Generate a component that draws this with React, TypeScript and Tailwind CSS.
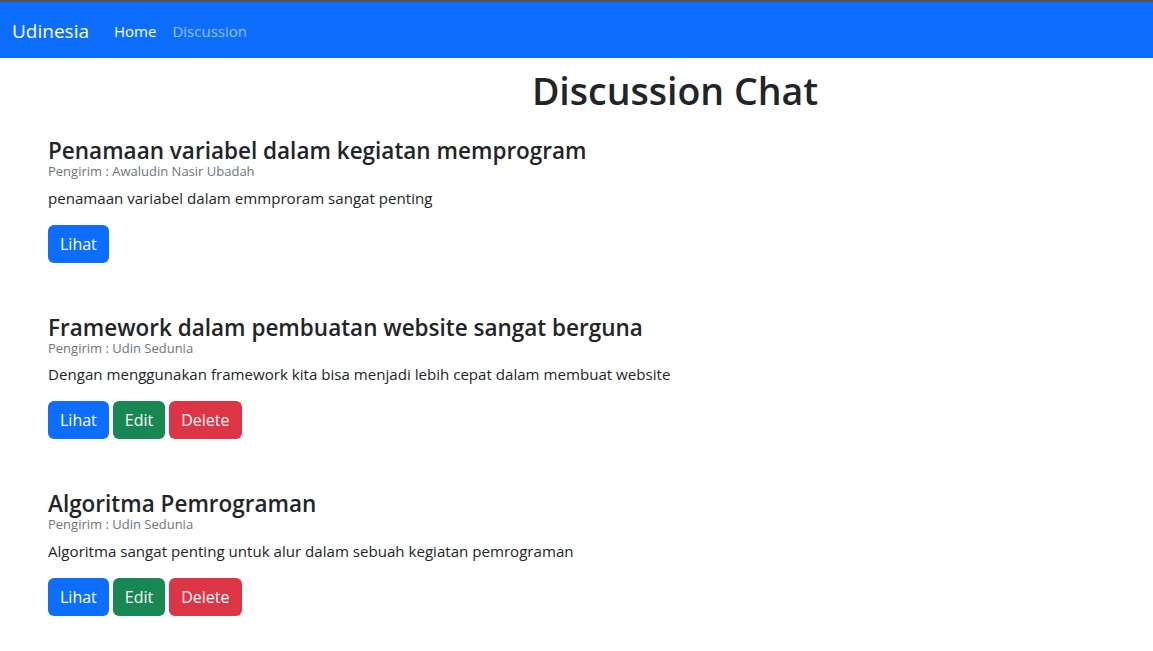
import React from 'react'

const POSTS = [
  {
    title: 'Penamaan variabel dalam kegiatan memprogram',
    sender: 'Awaludin Nasir Ubadah',
    body: 'penamaan variabel dalam emmproram sangat penting',
    own: false,
  },
  {
    title: 'Framework dalam pembuatan website sangat berguna',
    sender: 'Udin Sedunia',
    body: 'Dengan menggunakan framework kita bisa menjadi lebih cepat dalam membuat website',
    own: true,
  },
  {
    title: 'Algoritma Pemrograman',
    sender: 'Udin Sedunia',
    body: 'Algoritma sangat penting untuk alur dalam sebuah kegiatan pemrograman',
    own: true,
  },
]

const btn = 'h-[38px] px-3 rounded-[6px] text-white text-base leading-6'

export default function App() {
  return (
    <div className="min-h-[651px] bg-white text-[#212529]" style={{ fontFamily: '"Open Sans", "Noto Sans", sans-serif' }}>
      <div className="h-[2px] bg-[#555]" />
      <nav className="h-[56px] bg-[#0d6efd] px-3 flex items-center pt-[2px]">
        <span className="text-[19px] text-white mr-[17px]">Udinesia</span>
        <a className="px-2 text-[15px] text-white">Home</a>
        <a className="px-2 text-[15px] text-white/55">Discussion</a>
      </nav>

      <main className="pl-12">
        <h1 className="ml-[149px] text-center text-[37.5px] font-semibold leading-[1.2] mt-[10px]">Discussion Chat</h1>

        <div className="flex flex-col gap-[51px] mt-[24px]">
          {POSTS.map((p) => (
            <div key={p.title}>
              <h4 className="text-[22.5px] font-semibold leading-[1.2]">{p.title}</h4>
              <small className="block text-[13px] leading-[1.2] text-[#6c757d]">Pengirim : {p.sender}</small>
              <p className="mt-[6px] mb-[15px] text-[15.1px] leading-6">{p.body}</p>
              <div className="flex gap-1">
                <button className={`${btn} bg-[#0d6efd]`}>Lihat</button>
                {p.own && (
                  <>
                    <button className={`${btn} bg-[#198754]`}>Edit</button>
                    <button className={`${btn} bg-[#dc3545]`}>Delete</button>
                  </>
                )}
              </div>
            </div>
          ))}
        </div>
      </main>
    </div>
  )
}
